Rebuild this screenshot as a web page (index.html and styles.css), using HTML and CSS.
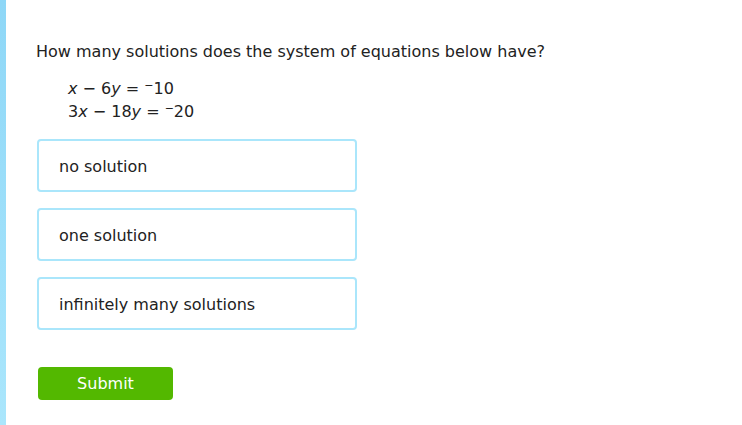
FILE: index.html
```html
<!DOCTYPE html>
<html lang="en">
<head>
    <meta charset="UTF-8">
    <title>Practice</title>
    <link rel="stylesheet" href="styles.css">
</head>
<body>

<div class="page">
    <div class="side-bar"></div>
    <div class="question">
        <p class="prompt">How many solutions does the system of equations below have?</p>
        <div class="system">
            <div class="eq"><i>x</i> &minus; 6<i>y</i> = <sup>&minus;</sup>10</div>
            <div class="eq">3<i>x</i> &minus; 18<i>y</i> = <sup>&minus;</sup>20</div>
        </div>
        <div class="choices">
            <button class="choice">no solution</button>
            <button class="choice">one solution</button>
            <button class="choice">infinitely many solutions</button>
        </div>
        <button class="submit">Submit</button>
    </div>
</div>

</body>
</html>
```

FILE: styles.css
```css
body {
    margin: 0;
    background: #fff;
    font-family: "DejaVu Sans", Verdana, sans-serif;
    color: #222;
}
.page {
    display: flex;
    height: 425px;
    overflow: hidden;
}
.side-bar {
    width: 6px;
    flex-shrink: 0;
    background: linear-gradient(#8ed7f7, #aae6fc);
}
.question {
    padding: 42px 0 0 30px;
}
.prompt {
    margin: 0;
    font-size: 16px;
    line-height: 20px;
}
.system {
    margin: 15px 0 0 32px;
    font-size: 16px;
    line-height: 23px;
}
.eq sup {
    font-size: 11px;
    vertical-align: 5px;
    line-height: 0;
}
.choices {
    display: flex;
    flex-direction: column;
    gap: 16px;
    margin-top: 16px;
    margin-left: 1px;
}
.choice {
    width: 320px;
    height: 53px;
    padding: 2px 0 0 20px;
    text-align: left;
    background: #fff;
    border: 2px solid #aae6fb;
    border-radius: 4px;
    font-family: inherit;
    font-size: 16px;
    color: #222;
}
.submit {
    display: block;
    margin: 37px 0 0 2px;
    width: 135px;
    height: 33px;
    border: none;
    border-radius: 4px;
    background: #53b800;
    color: #fff;
    font-family: inherit;
    font-size: 16px;
}
```
